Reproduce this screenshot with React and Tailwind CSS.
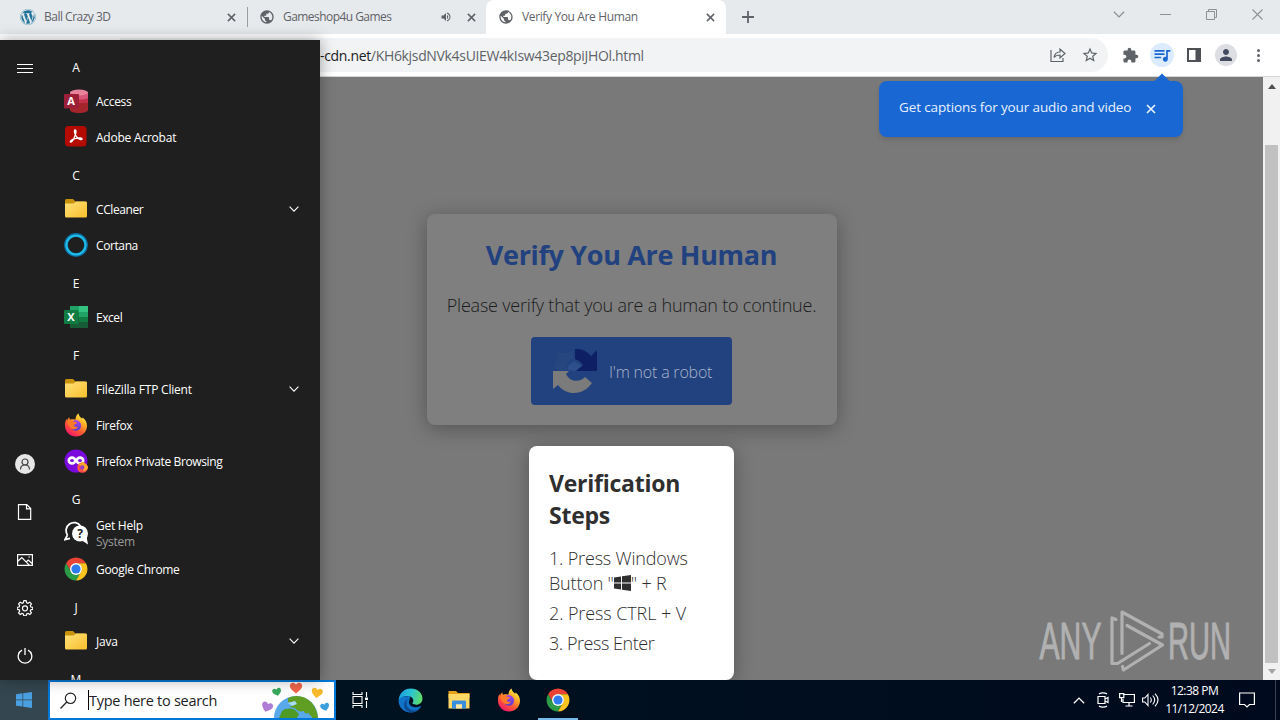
import React from "react";
import { FaWordpress } from "react-icons/fa";
import { MdExtension, MdPerson, MdPublic, MdQueueMusic, MdStarBorder, MdVolumeUp } from "react-icons/md";

const CloseIcon = ({ className = "size-[9px]" }) => (
  <svg viewBox="0 0 10 10" className={className} fill="none" stroke="currentColor" strokeWidth="1.7">
    <path d="M1 1l8 8M9 1l-8 8" />
  </svg>
);

const FolderIcon = () => (
  <svg viewBox="0 0 24 24" className="size-6">
    <defs>
      <linearGradient id="folder" x1="0" y1="0" x2="1" y2="1">
        <stop offset="0" stopColor="#ffe07a" />
        <stop offset="1" stopColor="#f8c02c" />
      </linearGradient>
    </defs>
    <path d="M1 3.500Q1 2 2.500 2H9l2.500 2.500H21V11H1z" fill="#c8920c" />
    <path d="M1 6.500h8.500L12 4.500h10q1 0 1 1V19q0 1.500-1.500 1.500h-19Q1 20.500 1 19z" fill="url(#folder)" />
  </svg>
);

const AccessIcon = () => (
  <svg viewBox="0 0 24 24" className="size-6">
    <path d="M6 3v18c0 4 18 4 18 0V3z" fill="#a4262c" />
    <path d="M6 3v11h18V3z" fill="#c4314b" />
    <path d="M6 3v6c4 2 14 2 18 0V3z" fill="#d9577a" />
    <ellipse cx="15" cy="3.500" rx="9" ry="3" fill="#e8829b" />
    <rect y="5" width="15" height="14.500" rx="1" fill="#9c1f38" />
    <text x="7" y="16" fill="#fff" textAnchor="middle" fontSize="11" fontWeight="bold" fontFamily="Open Sans, sans-serif">A</text>
  </svg>
);

const ExcelIcon = () => (
  <svg viewBox="0 0 24 24" className="size-6">
    <path d="M6 1h18v22H6z" fill="#21a366" />
    <path d="M15 1h9v6h-9z" fill="#33c481" />
    <path d="M6 7h9v5H6z" fill="#107c41" />
    <path d="M15 12h9v5h-9z" fill="#107c41" />
    <path d="M6 12h9v11H6zM15 17h9v6h-9z" fill="#185c37" />
    <rect y="5" width="14.500" height="14" rx="1" fill="#107c41" />
    <text x="7" y="16" fill="#fff" textAnchor="middle" fontSize="11" fontWeight="bold" fontFamily="Open Sans, sans-serif">X</text>
  </svg>
);

const AcrobatIcon = () => (
  <svg viewBox="0 0 24 24" className="size-6">
    <rect x="1" y="1" width="21.500" height="20.500" rx="3.500" fill="#b30b00" />
    <path
      d="M11 5c1.800 0 .8 4.500-1 8.300-1.300 2.700-2.700 4-3.500 3.700-1-.6 1.500-2.900 5.500-3.600 3.500-.7 6.200-.4 6 .6-.3 1.200-3.400.2-5.200-2C10.600 9.700 9.900 5 11 5z"
      fill="none"
      stroke="#fff"
      strokeWidth="1.400"
    />
  </svg>
);

const CortanaIcon = () => (
  <svg viewBox="0 0 24 24" className="size-6">
    <circle cx="12" cy="12" r="10" fill="none" stroke="#0a6fa6" strokeWidth="3.800" />
    <circle cx="12" cy="12" r="9.600" fill="none" stroke="#22bfe6" strokeWidth="2" />
  </svg>
);

const FirefoxIcon = () => (
  <svg viewBox="0 0 24 24" className="size-6">
    <defs>
      <linearGradient id="fox" x1=".85" y1=".05" x2=".25" y2="1">
        <stop offset="0" stopColor="#fff44f" />
        <stop offset=".35" stopColor="#ffa624" />
        <stop offset=".65" stopColor="#ff5436" />
        <stop offset="1" stopColor="#f0136f" />
      </linearGradient>
      <linearGradient id="foxGlobe" x1="0" y1="0" x2="0" y2="1">
        <stop offset="0" stopColor="#a344f0" />
        <stop offset="1" stopColor="#5a3fc8" />
      </linearGradient>
    </defs>
    <path
      d="M1 13c-.3-3 .5-5.500 1.700-7.200L3 8c.5-1.700 1.300-3 2.300-3.800 0 1 .2 1.800.7 2.500 1.800-.6 3.700-.6 5.400 0C11.600 4 12.500 1.700 14.600.5c.2 2.200 1.400 3.300 3.200 4.900.5-.1.8-.5.8-1C21.700 6.700 23 9.500 23 12.700 23 19 18 23.500 12 23.500 6 23.500 1.300 19 1 13z"
      fill="url(#fox)"
    />
    <circle cx="11.800" cy="12.400" r="5.300" fill="url(#foxGlobe)" />
    <path d="M3.500 8.600c2-1.500 4.700-1.500 6.400.2 1.300 0 3 .2 3 .9-.2 1-2.600 1.400-3 2.500.2 1.600 2 2.200 4 1.300-.8 2.800-4.900 3.800-7.500 1.200-1.700-1.700-3-4-2.900-6.100z" fill="#ff7b2b" />
  </svg>
);

const FirefoxPrivateIcon = () => (
  <svg viewBox="0 0 24 24" className="size-6">
    <circle cx="12" cy="12" r="11.500" fill="#7a0bdc" />
    <g fill="#7a0bdc" stroke="#fff" strokeWidth="2.600">
      <ellipse cx="8" cy="11.500" rx="3.200" ry="2.900" />
      <ellipse cx="16" cy="11.500" rx="3.200" ry="2.900" />
    </g>
    <circle cx="18.500" cy="18.500" r="5.300" fill="#ff4f4a" />
    <path d="M14 15.500c2 0 3-1.500 5-3 1 2 5 3 5 6.500-1 2-3 3-5 3 2-3-1-5-5-6.500z" fill="#ffae2b" />
    <circle cx="18.200" cy="18.400" r="2.200" fill="#a13fc4" />
  </svg>
);

const HelpIcon = () => (
  <svg viewBox="0 0 24 24" className="size-6">
    <path d="M3.500 14L1 18.500l5-1.200M3.500 14A7.200 7.200 0 1 1 16.500 5" fill="none" stroke="#fff" strokeWidth="1.800" />
    <circle cx="16" cy="12.500" r="8" fill="#fff" />
    <path d="M18 19.500l6 4-1.500-8z" fill="#fff" />
    <text x="16" y="17" fill="#1f1f1f" textAnchor="middle" fontSize="12" fontWeight="bold" fontFamily="Open Sans, sans-serif">?</text>
  </svg>
);

const ChromeIcon = () => (
  <svg viewBox="1 1 46 46" className="size-6">
    <path d="M24 13h19.050A22 22 0 0 0 4.950 13l9.520 16.500A11 11 0 0 1 24 13z" fill="#ea4335" />
    <path d="M14.470 29.500L4.950 13A22 22 0 0 0 24 46l9.530-16.500a11 11 0 0 1-19.060 0z" fill="#2b9b47" />
    <path d="M33.530 29.500L24 46a22 22 0 0 0 19.050-33H24a11 11 0 0 1 9.530 16.500z" fill="#fcc31e" />
    <circle cx="24" cy="24" r="11.500" fill="#fff" />
    <circle cx="24" cy="24" r="8.800" fill="#2f7bf0" />
  </svg>
);

const EdgeIcon = () => (
  <svg viewBox="0 0 24 24" className="size-[25px]">
    <defs>
      <linearGradient id="edgeTop" x1="0" y1=".3" x2="1" y2=".5">
        <stop offset="0" stopColor="#1b9de2" />
        <stop offset=".5" stopColor="#2bc3d2" />
        <stop offset="1" stopColor="#5fdc66" />
      </linearGradient>
    </defs>
    <path d="M.5 12c0 6.500 5 11.500 11.500 11.500 4.300 0 8-2.200 10-5.500.3-.6-.2-.8-.7-.5C16 20 10 17.500 10.500 13L12 8 2 8z" fill="#1173c7" />
    <path d="M.6 11.500C1.300 5 6 .5 12.200.5 19 .5 23.500 5.300 23.500 10c0 4-3 6-6 6-2.600 0-4.200-1-3.400-2 1.600-2 .3-5.700-3.600-6.200C6 7.200 2.300 8.500.6 11.500z" fill="url(#edgeTop)" />
    <path d="M9.500 10.500c-3.500 5 0 11 6 11 2.600 0 4.700-1 6.300-2.800C18 24.500 10 25 7 20.500 4.500 17 6 12 9.500 10.500z" fill="#0c4b94" />
  </svg>
);

const ExplorerIcon = () => (
  <svg viewBox="0 0 24 24" className="size-6">
    <path d="M1.500 3h7.500l2 2h11.500v5h-21z" fill="#e7a21b" />
    <path d="M1.500 6h21v14.500h-21z" fill="#ffd867" />
    <path d="M6 12.500h12q1 0 1 1V20.500h-4v-4H9v4H5v-7q0-1 1-1z" fill="#3a8fdc" />
    <path d="M9 16.500h6v4H9z" fill="#ffe9a8" />
  </svg>
);

const ChevronDown = ({ className }) => (
  <svg viewBox="0 0 10 6" className={className} fill="none" stroke="currentColor" strokeWidth="1.100">
    <path d="M.6.7L5 5.100 9.400.7" />
  </svg>
);

const menuItems = [
  { letter: "A" },
  { icon: AccessIcon, label: "Access", track: "tracking-[-0.3px]" },
  { icon: AcrobatIcon, label: "Adobe Acrobat", track: "tracking-[-0.22px]" },
  { letter: "C" },
  { icon: FolderIcon, label: "CCleaner", expand: true, track: "tracking-[-0.4px]" },
  { icon: CortanaIcon, label: "Cortana", track: "tracking-[-0.4px]" },
  { letter: "E" },
  { icon: ExcelIcon, label: "Excel", track: "tracking-[-0.45px]" },
  { letter: "F" },
  { icon: FolderIcon, label: "FileZilla FTP Client", expand: true, track: "tracking-[-0.2px]" },
  { icon: FirefoxIcon, label: "Firefox", track: "tracking-[-0.3px]" },
  { icon: FirefoxPrivateIcon, label: "Firefox Private Browsing", track: "tracking-[-0.37px]" },
  { letter: "G" },
  { icon: HelpIcon, label: "Get Help", sub: "System", track: "tracking-[-0.25px]" },
  { icon: ChromeIcon, label: "Google Chrome", track: "tracking-[-0.3px]" },
  { letter: "J" },
  { icon: FolderIcon, label: "Java", expand: true, track: "tracking-[-0.2px]" },
  { letter: "M" },
];

const railIcons = [
  <svg key="user" viewBox="0 0 20 20" className="size-5">
    <circle cx="10" cy="10" r="10" fill="#e6e6e6" />
    <g fill="none" stroke="#444" strokeWidth="1.200">
      <circle cx="10" cy="8" r="3" />
      <path d="M5.500 15.500C5.500 9.500 14.500 9.500 14.500 15.500" />
    </g>
  </svg>,
  <svg key="docs" viewBox="0 0 16 16" className="size-4" fill="none" stroke="#fff" strokeWidth="1.200">
    <path d="M1.500.6h8.300l3.900 4v10.800H1.500zM9.500.6v4.200h4.200" />
  </svg>,
  <svg key="pictures" viewBox="0 0 16 16" className="size-4" fill="none" stroke="#fff" strokeWidth="1.200">
    <path d="M.6 2.600h14.800v10.800H.6zM.6 9.500l4.200-4 7.700 7.800M9.200 10l2-2 4.200 3.800M11.500 5h1.500" />
  </svg>,
  <svg key="settings" viewBox="-12 -12 24 24" className="size-4" fill="none" stroke="#fff" strokeWidth="1.800" strokeLinejoin="round">
    <path d="M-1.800-11h3.600l.6 3.100 2.100.9 2.600-1.800 2.600 2.600L7.900-3.600l.9 2.100 2.900.5v3l-2.900.5-.9 2.100 1.800 2.600-2.600 2.600-2.600-1.800-2.100.9-.6 2.900h-3.600l-.6-2.900-2.100-.9-2.600 1.800-2.600-2.600 1.800-2.600-.9-2.100-2.900-.5v-3l2.900-.5.9-2.100-1.800-2.600 2.600-2.600 2.600 1.800 2.100-.9z" />
    <circle cx="0" cy="0.500" r="3.800" />
  </svg>,
  <svg key="power" viewBox="0 0 16 16" className="size-4" fill="none" stroke="#fff" strokeWidth="1.300">
    <path d="M8 0v7M5 2.200a6.800 6.800 0 1 0 6 0" />
  </svg>,
];

const StartMenu = () => (
  <div className="absolute left-0 top-10 z-20 flex h-[640px] w-80 overflow-hidden bg-[#1f1f1f] text-white shadow-[0_0_14px_rgba(0,0,0,0.35)]">
    <div className="flex w-[50px] flex-col justify-between pt-[5px]">
      <div className="flex h-12 items-center justify-center">
        <svg viewBox="0 0 16 10" className="h-[10px] w-4" stroke="#fff" strokeWidth="1">
          <path d="M0 .5h16M0 4.500h16M0 8.500h16" />
        </svg>
      </div>
      <div>
        {railIcons.map((icon) => (
          <div key={icon.key} className="flex h-12 items-center justify-center">
            {icon}
          </div>
        ))}
      </div>
    </div>
    <div className="flex-1 pt-[7px]">
      {menuItems.map(({ letter, icon: Icon, label, sub, expand, track }) =>
        letter ? (
          <div key={letter} className="flex h-9 w-[52px] items-center justify-center pt-1.5 text-[12px]">
            {letter}
          </div>
        ) : (
          <div key={label} className="flex h-9 items-center pl-3.5 pr-[21px]">
            <Icon />
            <div className={`ml-2 flex-1 whitespace-nowrap pt-0.5 text-[12px] leading-4 ${track}`}>
              <div>{label}</div>
              {sub && <div className="text-[#9a9a9a]">{sub}</div>}
            </div>
            {expand && <ChevronDown className="h-[6px] w-[10px]" />}
          </div>
        )
      )}
    </div>
  </div>
);

const TabStrip = () => (
  <div className="flex h-[34px] bg-[#e7eaed] text-[12px] text-[#5f6368]">
    <div className="flex w-[247px] items-center pl-5 pr-[11px]">
      <FaWordpress className="size-4 text-[#21759b]" />
      <span className="ml-2 flex-1 tracking-[-0.5px]">Ball Crazy 3D</span>
      <CloseIcon />
    </div>
    <div className="my-[7px] w-px bg-[#9a9da1]" />
    <div className="flex w-[238px] items-center pl-[11px] pr-[10px]">
      <MdPublic className="size-4" />
      <span className="ml-2 flex-1 tracking-[-0.55px]">Gameshop4u Games</span>
      <MdVolumeUp className="mr-[15px] size-3" />
      <CloseIcon />
    </div>
    <div className="flex w-[240px] items-center rounded-t-lg bg-white pl-3 pr-[11px]">
      <MdPublic className="size-4" />
      <span className="ml-2 flex-1 tracking-[-0.37px]">Verify You Are Human</span>
      <CloseIcon />
    </div>
    <div className="flex flex-1 items-center pl-4">
      <svg viewBox="0 0 12 12" className="size-3" stroke="#5f6368" strokeWidth="1.800">
        <path d="M6 0v12M0 6h12" />
      </svg>
    </div>
    <div className="flex items-center gap-[35px] pb-[5px] pr-[17px] text-[#8e9194]">
      <ChevronDown className="h-[7px] w-3" />
      <svg viewBox="0 0 11 11" className="size-[11px]" stroke="currentColor">
        <path d="M0 5.500h11" />
      </svg>
      <svg viewBox="0 0 11 11" className="size-[11px]" fill="none" stroke="currentColor">
        <path d="M.5 2.500h8v8h-8zM2.500 2.500v-2h8v8h-2" />
      </svg>
      <svg viewBox="0 0 11 11" className="size-[11px]" stroke="currentColor" strokeWidth="1.100">
        <path d="M.5.5l10 10M10.500.5l-10 10" />
      </svg>
    </div>
  </div>
);

const Toolbar = () => (
  <div className="flex h-[43px] items-center border-b border-[#d5d6d8] bg-white pr-[13px] text-[#5f6368]">
    <div className="ml-[120px] flex h-[34px] w-[988px] items-center rounded-r-full bg-[#f1f3f4] pl-[200px] pr-[9px]">
      <span className="flex-1 text-[14px] tracking-[-0.33px]">
        <span className="text-[#202124]">-cdn.net</span>/KH6kjsdNVk4sUIEW4kIsw43ep8piJHOl.html
      </span>
      <svg viewBox="0 0 16 16" className="mr-[15px] size-4" fill="none" stroke="currentColor" strokeWidth="1.200">
        <path d="M1 3v11.500h12V11M4 10.500C4.500 7 6.500 5 10 5V2l5 4.500L10 11V8C7.500 8 5.500 8.500 4 10.500z" />
      </svg>
      <MdStarBorder className="size-[18px]" />
    </div>
    <MdExtension className="ml-[14px] size-[17px]" />
    <div className="ml-[11px] flex size-6 items-center justify-center rounded-full bg-[#dcebfd]">
      <MdQueueMusic className="size-5 text-[#1a67d2]" />
    </div>
    <svg viewBox="0 0 14 14" className="ml-[13px] size-[14px]">
      <path d="M0 0h14v14H0zM2 2v10h6.500V2z" fill="#4d5156" fillRule="evenodd" />
    </svg>
    <div className="ml-[14px] flex size-[22px] items-center justify-center rounded-full bg-[#dcdee3]">
      <MdPerson className="size-[18px] text-[#454a60]" />
    </div>
    <div className="ml-5 flex flex-col gap-[2px]">
      <div className="size-[3px] rounded-full bg-[#5f6368]" />
      <div className="size-[3px] rounded-full bg-[#5f6368]" />
      <div className="size-[3px] rounded-full bg-[#5f6368]" />
    </div>
  </div>
);

const CaptionBubble = () => (
  <div className="absolute left-[879px] top-[81px] flex h-[56px] w-[304px] items-center rounded-lg bg-[#1967d2] pb-[3px] pl-5 text-[#e8f0fd] shadow-md">
    <div className="absolute left-[277px] top-[-5px] size-3 rotate-45 bg-[#1967d2]" />
    <span className="w-[247px] whitespace-nowrap text-[13.5px] tracking-[-0.13px]">Get captions for your audio and video</span>
    <CloseIcon className="mt-[3px] size-[10px]" />
  </div>
);

const RecaptchaIcon = () => (
  <svg viewBox="0 0 48 48" className="size-[48px]">
    <path d="M24 12V2c6-.5 12 2 16 7l6-6v21H25l7-6c-2-3-5-5-8-6z" fill="#0e1f64" />
    <path d="M22 3v9c-4 1-6 4-6 9l4 2H6L3 20c0-4 2-7 4-9L5 6h11c2-1.500 4-2.500 6-3z" fill="#26467f" />
    <path d="M17 19l6-5 8 5-7 5-7-1z" fill="#2d508b" />
    <path d="M2 24h16l-3 3c4 8 13 9 19 3l7 6C32 49 15 49 7 38l-5 4z" fill="#7b7b7b" />
  </svg>
);

const AnyRunLogo = () => (
  <svg viewBox="0 0 194 64" className="absolute left-[1038px] top-[608px] h-16 w-[194px] overflow-visible" fill="#b1b1b1" stroke="#b1b1b1">
    <text x="1.500" y="50.500" fontSize="51" strokeWidth="1" fontFamily="Liberation Sans Narrow, Liberation Sans, sans-serif" textLength="62" lengthAdjust="spacingAndGlyphs">ANY</text>
    <text x="130" y="50.500" fontSize="51" strokeWidth="1" fontFamily="Liberation Sans Narrow, Liberation Sans, sans-serif" textLength="63" lengthAdjust="spacingAndGlyphs">RUN</text>
    <g fill="none" strokeWidth="3.200" strokeLinejoin="round" strokeLinecap="round">
      <path d="M78 11.500l-4-1.500v45.500h5.500l32-20" />
      <path d="M84 45.500V4l40 22v3h-3" />
      <path d="M89 17.500l35.500 19.500-39 25-1-3.500" />
    </g>
  </svg>
);

const VerifyPage = () => (
  <div className="flex h-[603px] bg-[#797979]">
    <div className="flex flex-1 flex-col items-center pt-[137px]">
      <div className="flex h-[211px] w-[410px] flex-col items-center rounded-lg bg-[#7f7f7f] pt-5 shadow-[0_4px_20px_rgba(0,0,0,0.3)]">
        <h1 className="whitespace-nowrap text-[27px] font-bold leading-[42px] tracking-[-0.33px] text-[#21417f]">Verify You Are Human</h1>
        <p className="mt-[16px] whitespace-nowrap text-[18px] font-light leading-[26px] tracking-[-0.21px] text-[#1c1c1c]">
          Please verify that you are a human to continue.
        </p>
        <div className="mt-[19px] flex h-[68px] w-[201px] items-center rounded bg-[#21417f] pl-5 text-[#a9b4c8]">
          <RecaptchaIcon />
          <span className="ml-[10px] mt-px whitespace-nowrap text-[16px] font-light tracking-[-0.2px]">I'm not a robot</span>
        </div>
      </div>
      <div className="mt-[21px] h-[234px] w-[205px] rounded-lg bg-white px-5 pt-[21px] text-[#2f2f2f] shadow-[0_4px_20px_rgba(0,0,0,0.3)]">
        <h2 className="text-[23px] font-bold leading-8 tracking-[-0.25px]">Verification Steps</h2>
        <ol className="mt-[15px] space-y-[5px] whitespace-nowrap text-[18px] font-light leading-[25px] tracking-[-0.17px]">
          <li>
            1. Press Windows
            <br />
            Button "
            <svg viewBox="0 0 17 16" className="inline h-4 w-[17px] align-[-1px]" fill="currentColor">
              <path d="M0 2.500l7-1v6H0zM8 1.300L17 0v7.500H8zM0 8.500h7v6l-7-1zM8 8.500h9V16l-9-1.300z" />
            </svg>
            " + R
          </li>
          <li className="tracking-[-0.1px]">2. Press CTRL + V</li>
          <li className="tracking-[-0.45px]">3. Press Enter</li>
        </ol>
      </div>
    </div>
    <div className="flex w-[17px] flex-col items-center bg-[#f1f1f1]">
      <svg viewBox="0 0 8 5" className="mt-[7px] h-[5px] w-2">
        <path d="M0 5l4-5 4 5z" fill="#505050" />
      </svg>
      <div className="mt-[56px] h-[518px] w-[13px] bg-[#c1c1c1]" />
      <svg viewBox="0 0 8 5" className="mt-[6px] h-[5px] w-2">
        <path d="M0 0l4 5 4-5z" fill="#a3a3a3" />
      </svg>
    </div>
  </div>
);

const Heart = ({ x, y, scale, angle, color }) => (
  <path
    transform={`translate(${x} ${y}) rotate(${angle}) scale(${scale})`}
    d="M0 5C-4 2-6 0-5.500-2.500-5-5.200-1.500-5.500 0-3 1.500-5.500 5-5.200 5.500-2.500 6 0 4 2 0 5z"
    fill={color}
  />
);

const EarthArt = () => (
  <svg viewBox="0 0 72 36" className="h-9 w-[72px]">
    <circle cx="34" cy="36" r="22" fill="#58a8ea" />
    <path d="M26 16c8-4 17-2 23 4 4 4 6 9 7 16h-6c0-3-3-2-3-5-3 1-5 0-5-2-4 1-7 0-9-3l-5-1 3-3-5-2z" fill="#5f9e22" />
    <path d="M20 29c4-3 9-3 13-1l4 4-2 4H17z" fill="#4d9a24" />
    <path d="M26 21l7-2 2 3-5 2z" fill="#a9dbf5" />
    <Heart x={5} y={25} scale={1} angle={20} color="#ad7dd6" />
    <Heart x={15} y={10} scale={0.8} angle={-15} color="#3aaa5c" />
    <Heart x={34} y={6} scale={1.1} angle={0} color="#f0654a" />
    <Heart x={55} y={11} scale={1} angle={10} color="#f9bc2c" />
    <Heart x={63} y={25} scale={0.8} angle={-15} color="#3a9fdc" />
  </svg>
);

const Taskbar = () => (
  <div className="flex h-10 bg-gradient-to-r from-[#00141f] to-[#000a1e] text-white">
    <div className="flex w-12 items-center justify-center bg-[#34464f]">
      <svg viewBox="0 0 16 16" className="size-4" fill="#4a9fe0">
        <path d="M0 2.200l6.500-.9v6.200H0zM7.200 1.200L16 0v7.500H7.200zM0 8.300h6.500v6.300L0 13.700zM7.200 8.300H16V16l-8.800-1.300z" />
      </svg>
    </div>
    <div className="flex w-72 items-center border-2 border-[#0078d7] bg-white pl-[10px] text-[#222]">
      <svg viewBox="0 0 17 17" className="size-[17px]" fill="none" stroke="#222" strokeWidth="1.200">
        <circle cx="10.500" cy="6.300" r="5.200" />
        <path d="M6.800 10L.5 16.500" />
      </svg>
      <div className="ml-[11px] h-5 w-px bg-black" />
      <span className="flex-1 whitespace-nowrap pt-0.5 text-[14.5px] tracking-[-0.28px]">Type here to search</span>
      <EarthArt />
    </div>
    <div className="flex w-12 items-center justify-center">
      <svg viewBox="0 0 17 16" className="h-4 w-[17px]" fill="none" stroke="#fff" strokeWidth="1.100">
        <path d="M1 0v2.500h9V0M1 16v-2.500h9V16M1 4.500h9v7H1zM14.500 0v5M14.500 9v7" />
        <path d="M13 5.500h3v2.500h-3z" fill="#fff" stroke="none" />
      </svg>
    </div>
    <div className="flex w-[50px] items-center justify-center pl-[3px]"><EdgeIcon /></div>
    <div className="flex w-[50px] items-center justify-center"><ExplorerIcon /></div>
    <div className="flex w-[49px] items-center justify-center"><FirefoxIcon /></div>
    <div className="flex w-[50px] flex-col items-center">
      <div className="flex h-[38px] items-center pt-0.5"><ChromeIcon /></div>
      <div className="h-0.5 w-10 bg-[#76b9ed]" />
    </div>
    <div className="ml-auto flex items-center pr-[4px]">
      <ChevronDown className="mr-[11px] h-[7px] w-3 rotate-180" />
      <svg viewBox="0 0 14 16" className="mr-[9px] h-4 w-[14px]" fill="none" stroke="#fff" strokeWidth="1.200">
        <path d="M2 4.500h7v7H2zM9 7l3-1.500v5L9 9M3 2c2-1.500 6-1.500 8 0M3 14c2 1.500 6 1.500 8 0" />
      </svg>
      <svg viewBox="0 0 16 14" className="mr-[7px] h-[14px] w-4" fill="none" stroke="#fff" strokeWidth="1.200">
        <path d="M5 1.500h10.400v8H4V6M10 9.500v3.500M6.500 13h7M.6.6h4.200v4H.6zM2.500 4.500V9" />
      </svg>
      <svg viewBox="0 0 17 14" className="h-[14px] w-[17px]" fill="none" stroke="#fff" strokeWidth="1.100">
        <path d="M.6 5h2.200L6 1.500v11L2.800 9H.6zM8.300 4.500q2 2.500 0 5M10.700 2.500q4 4.500 0 9M13 .7q6 6.300 0 12.600" />
      </svg>
      <div className="w-[72px] whitespace-nowrap pr-px text-center text-[12px] leading-[18px] tracking-[-0.5px]">
        <div>12:38 PM</div>
        <div>11/12/2024</div>
      </div>
      <svg viewBox="0 0 16 16" className="ml-2 mr-5 size-4" fill="none" stroke="#fff" strokeWidth="1.200">
        <path d="M.6 1h14.800v11.500H10.500L8 15l-2.500-2.500H.6z" />
      </svg>
      <div className="h-10 w-px bg-[#3a4354]" />
    </div>
  </div>
);

const App = () => {
  return (
    <div className="relative flex h-[720px] w-[1280px] flex-col overflow-hidden font-['Open_Sans','Noto_Sans',sans-serif]">
      <TabStrip />
      <Toolbar />
      <VerifyPage />
      <Taskbar />
      <CaptionBubble />
      <AnyRunLogo />
      <StartMenu />
    </div>
  );
};

export default App;
